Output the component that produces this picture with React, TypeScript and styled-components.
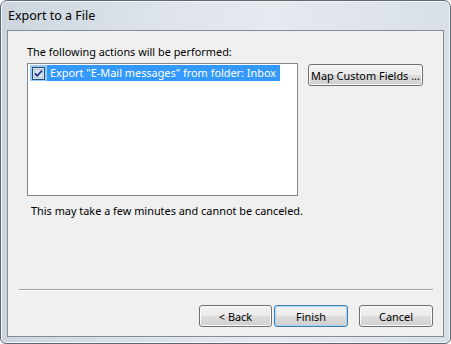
import React from "react";
import styled, { createGlobalStyle } from "styled-components";

const Global = createGlobalStyle`
  html, body { margin: 0; padding: 0; background: #ffffff; }
  body { font-family: "Noto Sans", "Open Sans", Arial, sans-serif; }
  * { box-sizing: border-box; }
`;

const Frame = styled.div`
  width: 451px;
  height: 344px;
  border: 1px solid #5d6873;
  border-radius: 7px 7px 6px 6px;
  background: linear-gradient(90deg, #cdd6df 0%, #dde3ea 35%, #e6eaef 60%, #d8dfe7 100%);
  box-shadow: inset 0 0 0 1px #f3f6f9;
  display: flex;
  flex-direction: column;
  overflow: hidden;
`;

const TitleBar = styled.div`
  height: 29px;
  padding: 0 0 1px 7px;
  display: flex;
  align-items: center;
  font-size: 12.5px;
  color: #000000;
`;

const Client = styled.div`
  flex: 1;
  margin: 0 6px 6px 6px;
  border: 1px solid #838d98;
  background: #f0f0f0;
  display: flex;
  flex-direction: column;
  padding: 0 10px 9px 11px;
  font-size: 10.9px;
  color: #000000;
`;

const Top = styled.div`
  padding: 13px 0 0 8px;
  display: flex;
  flex-direction: column;
`;

const Label = styled.div`
  line-height: 15px;
  height: 15px;
  margin-bottom: 4px;
`;

const Row = styled.div`
  display: flex;
  align-items: flex-start;
`;

const ListBox = styled.div`
  width: 271px;
  height: 133px;
  flex-shrink: 0;
  border: 1px solid #828790;
  background: #ffffff;
  padding: 1px 2px;
`;

const Item = styled.div`
  display: flex;
  align-items: center;
  height: 16px;
`;

const CheckCell = styled.div`
  width: 17px;
  height: 16px;
  background: #99c9f5;
  display: flex;
  align-items: center;
  justify-content: center;
`;

const ItemText = styled.div`
  background: #3399ff;
  color: #ffffff;
  height: 16px;
  line-height: 16px;
  padding: 0 4px 0 3px;
  white-space: nowrap;
`;

const Button = styled.button<{ $w: number; $focused?: boolean }>`
  width: ${(p) => p.$w}px;
  height: 22px;
  flex-shrink: 0;
  font-family: inherit;
  font-size: 10.9px;
  color: #000000;
  padding: 0;
  white-space: nowrap;
  border-radius: 3px;
  border: 1px solid ${(p) => (p.$focused ? "#3c7fb1" : "#707070")};
  background: linear-gradient(180deg, #f2f2f2 0%, #ebebeb 48%, #dddddd 52%, #cfcfcf 100%);
  box-shadow: inset 0 0 0 1px ${(p) => (p.$focused ? "#a9d6f5" : "#fcfcfc")};
  cursor: default;
`;

const SideButton = styled(Button)`
  margin: 1px 0 0 10px;
`;

const Note = styled.div`
  margin: 7px 0 0 4px;
  line-height: 15px;
`;

const Spacer = styled.div`
  flex: 1;
`;

const Separator = styled.div`
  height: 1px;
  background: #a0a0a0;
  border-bottom: 1px solid #ffffff;
  box-sizing: content-box;
  margin-bottom: 14px;
`;

const Footer = styled.div`
  display: flex;
  justify-content: flex-end;
  align-items: center;
`;

const Gap = styled.div<{ $w: number }>`
  width: ${(p) => p.$w}px;
`;

function CheckBox() {
  return (
    <svg width="13" height="13" viewBox="0 0 13 13">
      <rect x="0.5" y="0.5" width="12" height="12" fill="#ffffff" stroke="#1c4f7e" />
      <rect x="2" y="2" width="9" height="9" fill="#dbe4ee" stroke="#7a94ad" strokeWidth="0.6" />
      <path d="M3 6.3 L5.3 8.8 L10 3.6" fill="none" stroke="#21348b" strokeWidth="1.7" />
    </svg>
  );
}

export default function App() {
  return (
    <>
      <Global />
      <Frame>
        <TitleBar>Export to a File</TitleBar>
        <Client>
          <Top>
            <Label>The following actions will be performed:</Label>
            <Row>
              <ListBox>
                <Item>
                  <CheckCell>
                    <CheckBox />
                  </CheckCell>
                  <ItemText>Export "E-Mail messages" from folder: Inbox</ItemText>
                </Item>
              </ListBox>
              <SideButton $w={115}>Map Custom Fields ...</SideButton>
            </Row>
            <Note>This may take a few minutes and cannot be canceled.</Note>
          </Top>
          <Spacer />
          <Separator />
          <Footer>
            <Button $w={73}>&lt; Back</Button>
            <Gap $w={2} />
            <Button $w={74} $focused>Finish</Button>
            <Gap $w={11} />
            <Button $w={74}>Cancel</Button>
          </Footer>
        </Client>
      </Frame>
    </>
  );
}
